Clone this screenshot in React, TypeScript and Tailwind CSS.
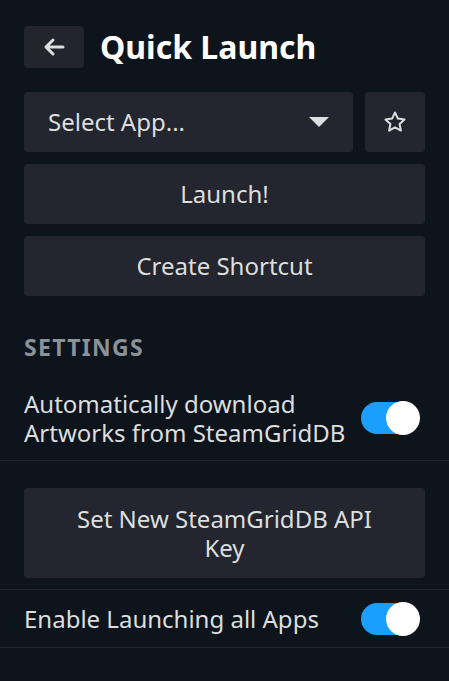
import React from "react";

function Toggle() {
  return (
    <div className="relative w-[58px] h-[32px] rounded-full bg-[#1a9fff] shrink-0">
      <div className="absolute right-[-1px] top-[-1px] w-[34px] h-[34px] rounded-full bg-white" />
    </div>
  );
}

export default function App() {
  return (
    <div
      className="w-[449px] h-[681px] bg-[#0e141b] text-[#dcdedf] overflow-hidden"
      style={{ fontFamily: '"Noto Sans", "Open Sans", sans-serif' }}
    >
      <div className="px-6 pt-[26px]">
        <div className="flex items-center gap-4">
          <button className="w-[60px] h-[42px] rounded-[4px] bg-[#23252d] flex items-center justify-center">
            <svg width="24" height="20" viewBox="0 0 24 20" fill="none">
              <path d="M21 10H4M11 3L4 10L11 17" stroke="#dcdedf" strokeWidth="3" strokeLinecap="round" strokeLinejoin="round" />
            </svg>
          </button>
          <h1 className="text-[32px] font-bold text-white leading-none">Quick Launch</h1>
        </div>

        <div className="mt-6 flex gap-3">
          <div className="flex-1 h-[60px] rounded-[4px] bg-[#23262e] flex items-center justify-between pl-6 pr-6">
            <span className="text-[24px]">Select App...</span>
            <svg width="20" height="10" viewBox="0 0 20 10">
              <path d="M0 0H20L10 10Z" fill="#dcdedf" />
            </svg>
          </div>
          <button className="w-[60px] h-[60px] rounded-[4px] bg-[#23262e] flex items-center justify-center">
            <svg width="24" height="24" viewBox="0 0 24 24" fill="none">
              <path d="M12 2.5l2.9 6.1 6.6.8-4.9 4.6 1.3 6.6L12 17.3l-5.9 3.3 1.3-6.6-4.9-4.6 6.6-.8z" stroke="#dcdedf" strokeWidth="2" strokeLinejoin="round" />
            </svg>
          </button>
        </div>

        <button className="mt-3 w-full h-[60px] rounded-[4px] bg-[#23262e] text-[24px]">Launch!</button>
        <button className="mt-3 w-full h-[60px] rounded-[4px] bg-[#23262e] text-[24px]">Create Shortcut</button>

        <div className="mt-[37px] text-[23px] font-bold tracking-[1.3px] text-[#8b929a] leading-[28px]">SETTINGS</div>
      </div>

      <div className="mt-[28px] flex items-center justify-between px-6 pb-[13px] border-b border-[#23262e]">
        <div className="text-[24px] leading-[29px]">
          <div>Automatically download</div>
          <div>Artworks from SteamGridDB</div>
        </div>
        <div className="mr-[6px]"><Toggle /></div>
      </div>

      <div className="px-6 pt-[27px] pb-[11px] border-b border-[#23262e]">
        <button className="w-full h-[90px] rounded-[4px] bg-[#23262e] text-[24px] leading-[29px] px-10">
          Set New SteamGridDB API Key
        </button>
      </div>

      <div className="h-[58px] flex items-center justify-between px-6 border-b border-[#23262e]">
        <div className="text-[24px]">Enable Launching all Apps</div>
        <div className="mr-[6px]"><Toggle /></div>
      </div>
    </div>
  );
}
